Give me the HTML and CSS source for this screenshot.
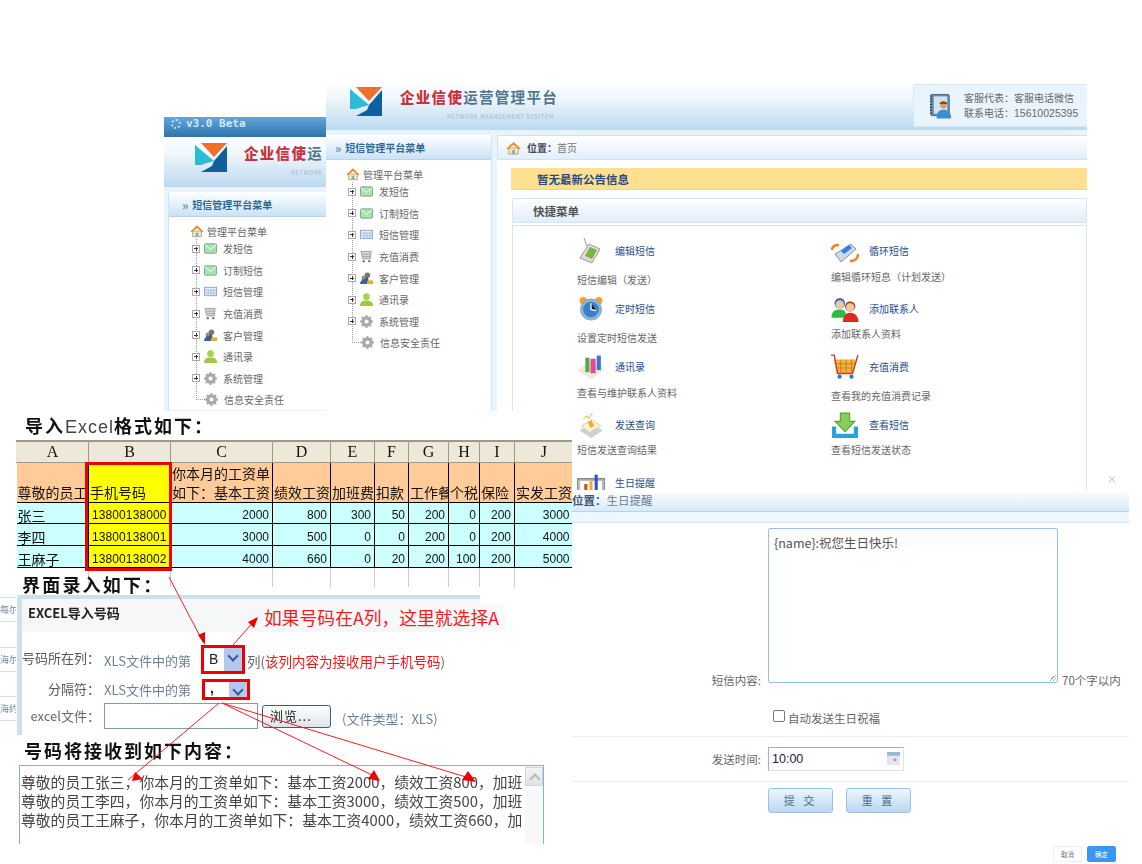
FILE: index.html
```html
<!DOCTYPE html>
<html lang="zh-CN">
<head>
<meta charset="utf-8">
<title>企业信使运营管理平台</title>
<link rel="stylesheet" href="styles.css">
</head>
<body>
<svg class="defs" width="0" height="0" aria-hidden="true">
  <symbol id="logo" viewBox="0 0 32 29"><path fill="#f0702a" d="M6 0h26L19 14z"/><path fill="#2cbcd8" d="M0 2l19 16-7 2-6 2v-0H0z"/><path fill="#10609f" d="M32 3v26H6l11-6 2-5z"/></symbol>
  <symbol id="home" viewBox="0 0 16 14"><path fill="#f4e7c8" stroke="#b9a476" d="M3 7h10v6.500H3z"/><path fill="#7eb0cc" d="M6.500 9h3v4.500h-3z"/><path fill="#ef8a2a" d="M8 .5L.5 7.500 2 8.500 8 3.500l6 5 1.500-1z"/></symbol>
  <symbol id="mail" viewBox="0 0 14 11"><rect x=".5" y=".5" width="13" height="10" rx="1" fill="#a7e2b0" stroke="#7f9f88"/><path fill="none" stroke="#fff" d="M1 1.500l6 5 6-5"/></symbol>
  <symbol id="grid" viewBox="0 0 14 10"><rect x=".5" y=".5" width="13" height="9" fill="#e7eef8" stroke="#8aa6d0"/><path stroke="#a9bbd6" d="M4.500 3v6M7.500 3v6M10.500 3v6M1 3.500h12M1 6.500h12"/></symbol>
  <symbol id="cart" viewBox="0 0 14 14"><path fill="#d4d6d6" stroke="#9a9d9d" d="M1 1.500h11l-1 8H3z"/><path stroke="#a5a8a8" d="M3 4.500h9M3 7h8"/><circle cx="4" cy="12" r="1.300" fill="#777"/><circle cx="10" cy="12" r="1.300" fill="#777"/></symbol>
  <symbol id="team" viewBox="0 0 14 14"><circle cx="8" cy="3.500" r="3" fill="#777"/><path fill="#555" d="M2 8c0-3 2-3 3-3s4 0 4 3v3H2z"/><circle cx="4" cy="6" r="2.300" fill="#8a8f99"/><path fill="#3060c0" d="M0 13c0-3 2-4 4-4s4 1 4 4z"/><path fill="#e0b020" d="M8 9h6v4H8z"/></symbol>
  <symbol id="person" viewBox="0 0 14 14"><circle cx="7" cy="4" r="3.600" fill="#a7d24c"/><path fill="#9ccb3c" d="M0 14c0-5 3-6 7-6s7 1 7 6z"/></symbol>
  <symbol id="gear" viewBox="0 0 14 14"><circle cx="7" cy="7" r="4" fill="none" stroke="#a8aaa8" stroke-width="3.500"/><path stroke="#a8aaa8" stroke-width="2" d="M7 0v3M7 11v3M0 7h3M11 7h3M2 2l2 2M10 10l2 2M12 2l-2 2M4 10l-2 2"/></symbol>
  <symbol id="book" viewBox="0 0 26 26"><rect x="2" y="1" width="19" height="22" rx="1" fill="#5f8fb0" stroke="#3d6a8a"/><rect x="5" y="3" width="14" height="18" fill="#d8e2ea"/><path stroke="#334" stroke-dasharray="1 2" stroke-width="2" d="M2 2v20"/><circle cx="15" cy="12" r="3.500" fill="#d89a6a"/><path fill="#7a4b25" d="M11 11c0-4 8-4 8 0z"/><path fill="#3b8ed0" d="M8 26c0-7 3-9 7-9s8 2 8 9z"/></symbol>
  <symbol id="b-phone" viewBox="0 0 28 26"><path stroke="#999" d="M10 8L7 0"/><path fill="#ddd" stroke="#999" d="M12 6l11 5-8 14-12-5z"/><path fill="#79b43e" d="M13 9l7 3-5 9-7-3z"/></symbol>
  <symbol id="b-loop" viewBox="0 0 28 26"><path fill="#cfd8e6" stroke="#8894a5" d="M4 16L20 6l5 5L10 24z"/><path fill="#3080e0" d="M10 13l8-6 3 3-8 6z"/><path fill="none" stroke="#f08020" stroke-width="2.500" d="M1 12c0-4 3-5 7-5M27 16c0 4-3 7-8 7"/></symbol>
  <symbol id="b-clock" viewBox="0 0 24 25"><circle cx="4.500" cy="4.500" r="3.500" fill="#f4a030"/><circle cx="19.500" cy="4.500" r="3.500" fill="#f4a030"/><circle cx="12" cy="13" r="10" fill="#7fb8e0" stroke="#9aa"/><circle cx="12" cy="13" r="7.500" fill="#3a80c4"/><path stroke="#fff" stroke-width="1.300" d="M12 7v6l5 1"/></symbol>
  <symbol id="b-people" viewBox="0 0 26 25"><circle cx="8" cy="7" r="5" fill="#4a5db0"/><circle cx="8" cy="8" r="4" fill="#edc8a8"/><path fill="#28c040" d="M0 21c0-6 3-8 8-8s6 2 6 8z"/><circle cx="18" cy="10" r="5" fill="#b04a20"/><circle cx="18" cy="11" r="4" fill="#f0c8a0"/><path fill="#e02828" d="M11 25c0-6 3-9 7-9s8 3 8 9z"/></symbol>
  <symbol id="b-books" viewBox="0 0 27 24"><path fill="#f2e8d8" d="M0 15L14 6l13 8-13 10z"/><path fill="#58a848" d="M8 3h4v14H8z"/><path fill="#e84898" d="M13 4h5v14h-5z"/><path fill="#3878d0" d="M19 1h4v14h-4z"/></symbol>
  <symbol id="b-cart" viewBox="0 0 26 24"><path fill="#f6b23a" d="M3 5h20l-3 13H6z"/><path fill="none" stroke="#c83a20" stroke-width="1.300" d="M0 1h3l3 17h14l5-17"/><path stroke="#c8832a" d="M3 9h19M4 13h17M9 5v13M14 5v13M19 5v13"/><circle cx="8" cy="21" r="2" fill="#2a7ac0"/><circle cx="19" cy="21" r="2" fill="#2a7ac0"/></symbol>
  <symbol id="b-doc" viewBox="0 0 27 28"><path fill="#d0d0d0" d="M1 20l14-8 11 8-12 8z"/><path fill="#fff1c8" stroke="#ccc" d="M3 15l12-7 9 7-12 7z"/><path fill="#f4a830" d="M10 11l4-2 3 6-4 2z"/><path fill="none" stroke="#f0a020" d="M5 8l4-4 2 3 4-6"/></symbol>
  <symbol id="b-down" viewBox="0 0 25 25"><path fill="#8acb5a" stroke="#4ea020" d="M8 1h9v8h5L12.500 19 3 9h5z"/><path fill="#2ea0dc" d="M0 14h4v7h17v-7h4v11H0z"/></symbol>
  <symbol id="b-chart" viewBox="0 0 27 16"><path fill="#bbb" stroke="#666" d="M0 4h27v12H0z"/><path fill="#fff" d="M3 6h21v10H3z"/><path fill="#e04030" d="M7 9h3v7H7z"/><path fill="#f0b020" d="M12 6h3v10h-3z"/><path fill="#3050d0" d="M17 0h3v16h-3z"/></symbol>
  <symbol id="cal" viewBox="0 0 14 14"><rect width="14" height="14" fill="#dfe7f2"/><rect width="14" height="4" fill="#9bb7d6"/><rect x="7" y="7" width="3" height="3" fill="#e88"/></symbol>
</svg>

<main class="canvas">

  <section class="win win-back">
    <div class="version"><span class="version-dot"></span>v3.0 Beta</div>
    <header class="brand brand-back">
      <svg class="logo"><use href="#logo"/></svg>
      <div class="brand-text">
        <div class="brand-name"><b>企业信使</b>运</div>
        <div class="brand-sub">NETWORK</div>
      </div>
    </header>
    <aside class="side side-back">
      <h2 class="side-head"><span>»</span> 短信管理平台菜单</h2>
      <ul class="tree tree-back">
        <li class="tree-root"><svg class="ic-home"><use href="#home"/></svg>管理平台菜单</li>
        <li class="node"><i class="plus"></i><svg class="ic"><use href="#mail"/></svg>发短信</li>
        <li class="node"><i class="plus"></i><svg class="ic"><use href="#mail"/></svg>订制短信</li>
        <li class="node"><i class="plus"></i><svg class="ic"><use href="#grid"/></svg>短信管理</li>
        <li class="node"><i class="plus"></i><svg class="ic"><use href="#cart"/></svg>充值消费</li>
        <li class="node"><i class="plus"></i><svg class="ic"><use href="#team"/></svg>客户管理</li>
        <li class="node"><i class="plus"></i><svg class="ic"><use href="#person"/></svg>通讯录</li>
        <li class="node"><i class="plus"></i><svg class="ic"><use href="#gear"/></svg>系统管理</li>
        <li class="node leaf"><i class="elbow"></i><svg class="ic"><use href="#gear"/></svg>信息安全责任</li>
      </ul>
    </aside>
  </section>

  <section class="win win-main">
    <header class="brand brand-main">
      <svg class="logo"><use href="#logo"/></svg>
      <div class="brand-text">
        <div class="brand-name"><b>企业信使</b>运营管理平台</div>
        <div class="brand-sub">NETWORK MANAGEMENT SYSYTEM</div>
      </div>
      <div class="service">
        <svg class="service-ic"><use href="#book"/></svg>
        <div class="service-text">
          <div>客服代表：客服电话微信</div>
          <div>联系电话：<span class="latin">15610025395</span></div>
        </div>
      </div>
    </header>
    <div class="main-body">
      <aside class="side side-main">
        <h2 class="side-head"><span>»</span> 短信管理平台菜单</h2>
        <ul class="tree">
          <li class="tree-root"><svg class="ic-home"><use href="#home"/></svg>管理平台菜单</li>
          <li class="node"><i class="plus"></i><svg class="ic"><use href="#mail"/></svg>发短信</li>
          <li class="node"><i class="plus"></i><svg class="ic"><use href="#mail"/></svg>订制短信</li>
          <li class="node"><i class="plus"></i><svg class="ic"><use href="#grid"/></svg>短信管理</li>
          <li class="node"><i class="plus"></i><svg class="ic"><use href="#cart"/></svg>充值消费</li>
          <li class="node"><i class="plus"></i><svg class="ic"><use href="#team"/></svg>客户管理</li>
          <li class="node"><i class="plus"></i><svg class="ic"><use href="#person"/></svg>通讯录</li>
          <li class="node"><i class="plus"></i><svg class="ic"><use href="#gear"/></svg>系统管理</li>
          <li class="node leaf"><i class="elbow"></i><svg class="ic"><use href="#gear"/></svg>信息安全责任</li>
        </ul>
      </aside>
      <div class="content">
        <div class="crumb"><svg class="ic-crumb"><use href="#home"/></svg><b>位置：</b>首页</div>
        <div class="notice">暂无最新公告信息</div>
        <h2 class="quick-head">快捷菜单</h2>
        <div class="quick">
          <div class="item"><div class="item-top"><svg class="big"><use href="#b-phone"/></svg><a>编辑短信</a></div><p class="desc gap-a">短信编辑（发送）</p></div>
          <div class="item"><div class="item-top"><svg class="big"><use href="#b-loop"/></svg><a>循环短信</a></div><p class="desc gap-b">编辑循环短息（计划发送）</p></div>
          <div class="item"><div class="item-top"><svg class="big"><use href="#b-clock"/></svg><a>定时短信</a></div><p class="desc gap-a">设置定时短信发送</p></div>
          <div class="item"><div class="item-top"><svg class="big"><use href="#b-people"/></svg><a>添加联系人</a></div><p class="desc gap-c">添加联系人资料</p></div>
          <div class="item"><div class="item-top"><svg class="big"><use href="#b-books"/></svg><a>通讯录</a></div><p class="desc gap-b">查看与维护联系人资料</p></div>
          <div class="item"><div class="item-top"><svg class="big"><use href="#b-cart"/></svg><a>充值消费</a></div><p class="desc gap-a">查看我的充值消费记录</p></div>
          <div class="item"><div class="item-top"><svg class="big"><use href="#b-doc"/></svg><a>发送查询</a></div><p class="desc gap-c">短信发送查询结果</p></div>
          <div class="item"><div class="item-top"><svg class="big"><use href="#b-down"/></svg><a>查看短信</a></div><p class="desc gap-c">查看短信发送状态</p></div>
          <div class="item"><div class="item-top"><svg class="big"><use href="#b-chart"/></svg><a>生日提醒</a></div></div>
        </div>
      </div>
    </div>
  </section>

  <section class="win win-import">
    <h3 class="shot-title title-excel">导入<span class="thin">Excel</span>格式如下：</h3>
    <table class="sheet">
      <colgroup><col class="c1"><col class="c2"><col class="c3"><col class="c4"><col class="c5"><col class="c6"><col class="c7"><col class="c8"><col class="c9"><col class="c10"></colgroup>
      <tr class="r-letters"><th>A</th><th>B</th><th>C</th><th>D</th><th>E</th><th>F</th><th>G</th><th>H</th><th>I</th><th>J</th></tr>
      <tr class="r-head"><td>尊敬的员工</td><td class="hl">手机号码</td><td>你本月的工资单<br>如下：基本工资</td><td>绩效工资</td><td>加班费</td><td>扣款</td><td>工作餐</td><td>个税</td><td>保险</td><td>实发工资</td></tr>
      <tr class="r-data r-first"><td class="name">张三</td><td class="hl num">13800138000</td><td>2000</td><td>800</td><td>300</td><td>50</td><td>200</td><td>0</td><td>200</td><td>3000</td></tr>
      <tr class="r-data"><td class="name">李四</td><td class="hl num">13800138001</td><td>3000</td><td>500</td><td>0</td><td>0</td><td>200</td><td>0</td><td>200</td><td>4000</td></tr>
      <tr class="r-data"><td class="name">王麻子</td><td class="hl num">13800138002</td><td>4000</td><td>660</td><td>0</td><td>20</td><td>200</td><td>100</td><td>200</td><td>5000</td></tr>
      <tr class="r-blank"><td></td><td></td><td></td><td></td><td></td><td></td><td></td><td></td><td></td><td></td></tr>
    </table>
    <div class="col-mark"></div>
    <h3 class="shot-title title-form">界面录入如下：</h3>
    <form class="xls-form">
      <div class="xls-head">EXCEL导入号码</div>
      <div class="xls-row row-a">
        <label class="xls-label">号码所在列：</label><span class="xls-hint">XLS文件中的第</span>
        <span class="pick pick-a"><span class="pick-val">B</span><span class="pick-arrow"></span></span>
        <span class="xls-note">列(<em>该列内容为接收用户手机号码</em>)</span>
      </div>
      <div class="xls-row row-b">
        <label class="xls-label">分隔符：</label><span class="xls-hint">XLS文件中的第</span>
        <span class="pick pick-b"><span class="pick-val">,</span><span class="pick-arrow"></span></span>
      </div>
      <div class="xls-row row-c">
        <label class="xls-label label-file">excel文件：</label><span class="file-box"></span>
        <span class="file-btn">浏览...</span><span class="file-type">(文件类型：XLS)</span>
      </div>
      <div class="annot">如果号码在A列，这里就选择A</div>
    </form>
    <h3 class="shot-title title-recv">号码将接收到如下内容：</h3>
    <div class="preview">
      <div class="preview-text">
        <div>尊敬的员工张三，你本月的工资单如下：基本工资2000，绩效工资800，加班</div>
        <div>尊敬的员工李四，你本月的工资单如下：基本工资3000，绩效工资500，加班</div>
        <div>尊敬的员工王麻子，你本月的工资单如下：基本工资4000，绩效工资660，加</div>
      </div>
      <div class="scroll"><span class="scroll-btn"></span></div>
    </div>
    <ul class="edge-list"><li>每尔</li><li>海尔</li><li>海约</li></ul>
  </section>

  <section class="win win-birthday">
    <div class="bd-crumb">位置：<span>生日提醒</span></div>
    <div class="bd-band"></div>
    <div class="bd-row bd-row-text">
      <label class="bd-label">短信内容:</label>
      <div class="bd-area">{name}:祝您生日快乐!<i class="grip"></i></div>
      <span class="bd-limit">70个字以内</span>
    </div>
    <div class="bd-row bd-row-check">
      <label class="bd-check"><span class="check-box"></span>自动发送生日祝福</label>
    </div>
    <div class="bd-row bd-row-time">
      <label class="bd-label">发送时间:</label>
      <div class="bd-time">10:00<svg class="cal"><use href="#cal"/></svg></div>
    </div>
    <div class="bd-row bd-row-btns">
      <span class="btn">提 交</span><span class="btn">重 置</span>
    </div>
    <div class="dlg-foot"><span class="dlg-btn">取消</span><span class="dlg-btn dlg-ok">确定</span></div>
    <span class="dlg-close">×</span>
  </section>

  <svg class="arrows" viewBox="0 0 1142 864">
    <g fill="none" stroke="#f02020" stroke-width="1">
      <path d="M169 577L203 642"/><path d="M233 645L255 620"/><path d="M219 703L128 780"/>
      <path d="M222 703L372 775"/><path d="M222 703L466 777"/>
    </g>
    <g fill="#f00000">
      <path d="M205 645l-7-10 7-3z"/><path d="M258 617l-10 5 6 6z"/><path d="M132 781l3-9 8 7z"/>
      <path d="M374 770l-6 9 12 2z"/><path d="M468 771l-6 9 14 2z"/>
    </g>
  </svg>
</main>
</body>
</html>
```

FILE: styles.css
```css
* { box-sizing: border-box; }
html, body { margin: 0; padding: 0; background: #fff; }
body { font-family: "Noto Sans CJK SC", "Liberation Sans", sans-serif; color: #555; }
h2, h3, p, ul { margin: 0; padding: 0; list-style: none; font-weight: normal; }
.defs { position: absolute; }

.canvas { position: relative; width: 1142px; height: 864px; overflow: hidden; filter: blur(.4px); }
.win { position: absolute; overflow: hidden; }

/* shared brand header */
.brand { display: flex; background: linear-gradient(#fff, #f2f8fc 30%, #bcd9ef); }
.logo { width: 32px; height: 29px; flex: none; }
.brand-name { font-size: 14.5px; font-weight: bold; letter-spacing: 1.3px; line-height: 18px; color: #4f7590; white-space: nowrap; }
.brand-name b { color: #c7343f; }
.brand-sub { font-size: 5.5px; letter-spacing: .7px; line-height: 7px; color: #9dbad0; margin: 8px 0 0 47px; white-space: nowrap; }

/* back window */
.win-back { left: 164px; top: 117px; width: 162px; height: 294px; background: #e8f3fb; }
.version { height: 20px; display: flex; align-items: center; gap: 5px; padding: 0 0 6px 7px; background: linear-gradient(#62a6dc, #2f74ac); color: #d4e7f5; font: bold 11px/14px "DejaVu Sans Mono", monospace; }
.version-dot { width: 10px; height: 10px; border-radius: 50%; border: 2px dotted #bfe0f7; }
.brand-back { height: 50px; padding: 6px 0 0 31px; gap: 17px; }
.brand-back .brand-text { padding-top: 1px; width: 200px; }
.side-back { position: relative; margin: 5px 0 0 4px; width: 200px; height: 218px; background: #fff; border-left: 1px solid #cfe3f3; }

/* shared sidebar */
.side-head { height: 25px; padding-left: 13px; display: flex; align-items: center; gap: 4px; font-size: 10px; font-weight: bold; color: #2f6a96; background: linear-gradient(#fff, #cbe2f5); border-bottom: 1px solid #b7d4ec; white-space: nowrap; }
.side-head span { color: #5a93c4; font-size: 12px; }
.tree { position: relative; padding: 7px 0 0 20px; font-size: 10px; color: #666; white-space: nowrap; }
.tree::before { content: ""; position: absolute; left: 26px; top: 22px; height: 161px; border-left: 1px dotted #999; }
.tree-back { padding: 7px 0 0 21px; }
.tree-back::before { left: 27px; top: 22px; }
.tree-root { position: relative; height: 14px; display: flex; align-items: center; gap: 3px; }
.ic-home { width: 14px; height: 14px; flex: none; }
.node { position: relative; height: 21.6px; display: flex; align-items: center; padding-left: 2px; }
.plus { width: 8px; height: 8px; flex: none; margin-right: 4px; border: 1px solid #aaa; background: linear-gradient(#333, #333) center / 4px 1px no-repeat, linear-gradient(#333, #333) center / 1px 4px no-repeat, #fff; }
.elbow { width: 9px; height: 11px; flex: none; margin: 0 0 11px 4px; margin-right: 0; border-left: 1px dotted #999; border-bottom: 1px dotted #999; }
.ic { width: 13px; height: 13px; flex: none; margin-right: 6px; }

/* main window */
.win-main { left: 326px; top: 82px; width: 761px; height: 408px; background: #fff; }
.brand-main { height: 48px; padding: 3px 0 0 24px; gap: 18px; position: relative; }
.brand-main .logo { margin-top: 2px; }
.brand-main .brand-text { padding-top: 3px; }
.service { position: absolute; right: 0; top: 2px; width: 174px; height: 43px; display: flex; align-items: center; gap: 10px; padding-left: 15px; background: #e9f4fc; border: 1px solid #d7e8f5; border-right: 0; border-radius: 3px 0 0 3px; font-size: 10px; line-height: 15px; color: #6a6a6a; }
.service-ic { width: 25px; height: 26px; flex: none; }
.latin { font-family: "Liberation Sans", sans-serif; font-size: 10.5px; }
.main-body { display: flex; gap: 5px; background: #e8f4fc; height: 360px; padding-top: 5px; }
.side-main { width: 166px; flex: none; background: #fff; border-right: 1px solid #cfe3f3; }
.side-main .side-head { padding-left: 9px; }
.content { flex: 1; min-width: 0; background: #fff; }
.crumb { height: 25px; display: flex; align-items: center; padding-left: 8px; font-size: 10px; color: #777; background: linear-gradient(#fff, #e2eefa); border: 1px solid #cfe3f3; border-right: 0; }
.crumb b { color: #445; margin-left: 6px; }
.ic-crumb { width: 15px; height: 14px; }
.notice { margin: 8px 0 0 14px; height: 22px; padding-left: 26px; background: #ffdf90; border-bottom: 1px solid #cfd6df; font-size: 11.5px; font-weight: bold; line-height: 22px; color: #2c4a7c; }
.quick-head { margin: 8px 0 0 15px; height: 25px; padding-left: 20px; border: 1px solid #d5e6f4; background: linear-gradient(#fff, #e0edf9); font-size: 11.5px; font-weight: bold; line-height: 24px; color: #555; }
.quick { margin: 2px 0 0 15px; height: 300px; padding: 12px 0 0 64px; border: 1px solid #d5e6f4; display: grid; grid-template-columns: 254px 1fr; grid-auto-rows: 58px; }
.item-top { display: flex; align-items: center; height: 26px; }
.big { width: 28px; height: 26px; flex: none; margin-right: 10px; }
.item-top a { font-size: 10px; line-height: 12px; color: #2a4c8c; }
.desc { font-size: 10px; line-height: 14px; color: #666; white-space: nowrap; }
.gap-a { margin-top: 9px; }
.gap-b { margin-top: 6px; }
.gap-c { margin-top: 5px; }

/* import panel */
.win-import { left: 0; top: 411px; width: 572px; height: 453px; background: #fff; padding-left: 16px; }
.shot-title { font-size: 18px; font-weight: bold; color: #111; white-space: nowrap; letter-spacing: 2px; }
.title-excel { height: 29px; line-height: 29px; padding-left: 9px; }
.thin { font-family: "Liberation Sans", sans-serif; font-weight: normal; color: #444; letter-spacing: 1px; }
.sheet { table-layout: fixed; width: 556px; border-collapse: collapse; font-size: 14px; color: #111; }
.c1 { width: 72px; } .c2 { width: 82px; } .c3 { width: 102px; } .c4 { width: 58px; } .c5 { width: 44px; }
.c6 { width: 34px; } .c7 { width: 40px; } .c8 { width: 31px; } .c9 { width: 35px; } .c10 { width: 58px; }
.sheet td, .sheet th { padding: 0 1px; overflow: hidden; white-space: nowrap; }
.r-letters th { height: 21px; background: #ece9d8; border: 1px solid #9b9a8d; border-top-width: 2px; border-left-color: #ece9d8; font: normal 16px "Liberation Serif", serif; }
.r-head td { height: 40px; background: #fc9; border-right: 1px solid #000; border-bottom: 1px solid #000; vertical-align: bottom; line-height: 19px; }
.r-data td { height: 22px; vertical-align: bottom; background: #cff; border-right: 1px solid #000; border-bottom: 1px solid #000; text-align: right; font: 12px/16px "Liberation Sans", sans-serif; padding-right: 3px; }
.r-first td { height: 21px; }
.r-head td.hl, .r-data td.hl { background: #ff0; }
.r-data td.name { text-align: left; font: 14px/16px "Noto Sans CJK SC", sans-serif; }
.r-data td.num { text-align: left; padding-left: 3px; letter-spacing: .1px; }
.r-blank td { height: 20px; border-right: 1px solid #ccc; }
.r-data td:last-child, .r-head td:last-child, .r-letters th:last-child, .r-blank td:last-child { border-right: 0; }
.col-mark { position: absolute; left: 85px; top: 51px; width: 87px; height: 109px; border: 3px solid #e00; }
.title-form { position: relative; margin: -14px 0 0 6px; height: 22px; line-height: 22px; letter-spacing: 2.2px; }
.xls-form { position: relative; margin-left: 1px; width: 463px; height: 140px; border-top: 4px solid #cfdfec; border-left: 5px solid #cfdfec; font-size: 13px; color: #666; }
.xls-head { height: 33px; padding-left: 6px; background: #f5f7f9; font: bold 13px/28px "Noto Sans CJK SC", sans-serif; color: #222; }
.xls-row { display: flex; align-items: center; white-space: nowrap; }
.row-a { height: 29px; margin-top: 13px; }
.row-b { height: 21px; margin-top: 5px; }
.row-c { height: 26px; margin-top: 3px; }
.xls-label { width: 78px; text-align: right; color: #555; }
.row-a .xls-label { margin-bottom: 5px; }
.row-b .xls-label { margin-bottom: 3px; }
.xls-hint { margin-left: 4px; width: 91px; color: #6d7f90; font-size: 13px; }
.row-a .xls-hint, .xls-note { padding-top: 2px; }
.pick { height: 100%; display: flex; border: 3px solid #e00; background: #fff; color: #222; font: 14px/22px "Liberation Sans", sans-serif; }
.pick-a { width: 44px; margin-left: 6px; }
.pick-b { width: 48px; margin-left: 7px; }
.pick-val { flex: 1; padding-left: 5px; }
.pick-b .pick-val { font-weight: bold; line-height: 12px; }
.pick-arrow { position: relative; width: 18px; background: #b4c8ef; }
.pick-arrow::after { content: ""; position: absolute; left: 5px; top: 4px; width: 6px; height: 6px; border: solid #3a5a90; border-width: 0 2px 2px 0; transform: rotate(45deg); }
.xls-note { margin-left: 2px; font-size: 13.5px; }
.xls-note em { font-style: normal; color: #f01818; }
.label-file { color: #667; margin-bottom: 1px; }
.file-box { margin-left: 4px; width: 154px; height: 26px; border: 1px solid #7f9db9; background: #fff; }
.file-btn { margin-left: 4px; width: 69px; height: 23px; border: 1px solid #375f88; border-radius: 3px; background: linear-gradient(#fff, #dfe3e8); color: #222; font-size: 13px; line-height: 20px; padding-left: 7px; letter-spacing: 1px; }
.file-type { margin-left: 11px; color: #6d7f90; padding-top: 4px; }
.annot { position: absolute; left: 242px; top: 5px; font-size: 17.8px; line-height: 26px; color: #f02020; white-space: nowrap; background: #f7f8fa; padding-right: 6px; }
.title-recv { margin: 4px 0 0 8px; height: 22px; line-height: 22px; }
.preview { margin: 4px 0 0 3px; width: 525px; height: 79px; display: flex; border: 1px solid #83aee4; border-bottom: 0; }
.preview-text { flex: 1; min-width: 0; overflow: hidden; padding: 6px 0 0 1px; font-size: 14.8px; line-height: 19px; color: #444; white-space: nowrap; }
.scroll { width: 18px; flex: none; background: #f8f8f8; }
.scroll-btn { display: block; height: 19px; margin-top: 1px; background: linear-gradient(#f4f4f4, #dfe3e6); border: 1px solid #d0d4d8; position: relative; }
.scroll-btn::after { content: ""; position: absolute; left: 5px; top: 7px; width: 6px; height: 6px; border: solid #bbb; border-width: 2px 0 0 2px; transform: rotate(45deg); }
.edge-list { position: absolute; left: 0; top: 186px; width: 16px; overflow: hidden; font-size: 9px; color: #6f8ba0; white-space: nowrap; }
.edge-list li { height: 25px; margin-bottom: 24.5px; border-top: 1px solid #cfe0ea; border-bottom: 1px solid #cfe0ea; line-height: 24px; }

/* birthday panel */
.win-birthday { left: 572px; top: 490px; width: 570px; height: 374px; background: #fff; padding-right: 13px; overflow: visible; }
.bd-crumb { height: 22px; font-size: 11.5px; line-height: 20px; font-weight: bold; color: #3a5a78; background: linear-gradient(#fff, #d9e9f7); border-bottom: 1px solid #b5d3ea; }
.bd-crumb span { font-weight: normal; color: #6a7f94; }
.bd-band { height: 11px; background: #eef7fd; border-bottom: 1px solid #dde3e6; }
.bd-row { display: flex; font-size: 11.5px; color: #666; border-bottom: 1px solid transparent; }
.bd-label { width: 189px; text-align: right; flex: none; }
.bd-row-text { height: 155px; margin-top: 6px; align-items: flex-end; line-height: 14px; }
.bd-row-text .bd-label { margin-bottom: -4px; }
.bd-area { position: relative; width: 290px; height: 155px; margin-left: 7px; padding: 6px 5px; flex: none; border: 1px solid #9bbce6; border-radius: 2px; background: linear-gradient(#f9f9f9, #fff 15%); font-size: 12.5px; line-height: 16px; color: #555; }
.grip { position: absolute; right: 1px; bottom: 1px; width: 7px; height: 7px; background: linear-gradient(135deg, transparent 50%, #aaa 50%, #aaa 60%, transparent 60%, transparent 75%, #aaa 75%, #aaa 85%, transparent 85%); }
.bd-limit { margin: 0 0 -4px 4px; font-size: 11.5px; line-height: 14px; white-space: nowrap; }
.bd-row-check { margin-top: 26px; height: 27px; padding-left: 201px; border-bottom-color: #eceff1; }
.bd-check { display: flex; gap: 3px; font-size: 11.5px; line-height: 14px; padding-top: 1px; }
.check-box { width: 12px; height: 12px; margin-top: -1px; border: 1px solid #777; border-radius: 2px; background: #fff; }
.bd-row-time { align-items: center; height: 45px; border-bottom-color: #eceff1; }
.bd-time { position: relative; width: 136px; height: 24px; margin-left: 7px; padding-left: 3px; border: 1px solid #d5e3f4; border-top-color: #8ab3e6; border-left-color: #8ab3e6; font: 12.5px/22px "Liberation Sans", sans-serif; color: #223; }
.cal { position: absolute; right: 3px; top: 4px; width: 13px; height: 13px; }
.bd-row-btns { padding: 6px 0 0 196px; gap: 13px; height: 32px; }
.btn { width: 65px; height: 25px; border: 1px solid #9cc3e4; border-radius: 3px; background: linear-gradient(#eef6fc, #b9d8f1); text-align: center; font-size: 11px; line-height: 23px; letter-spacing: 3px; color: #44708f; }
.dlg-foot { display: flex; justify-content: flex-end; gap: 5px; margin-top: 32px; padding-right: 13px; }
.dlg-btn { width: 29px; height: 16px; border: 1px solid #eee; border-radius: 2px; font-size: 6.5px; line-height: 14px; text-align: center; color: #777; background: #fff; }
.dlg-ok { background: #3b96f2; border-color: #3b96f2; color: #fff; }
.dlg-close { position: absolute; left: 535px; top: -17px; font-size: 10px; line-height: 12px; color: #bbb; }

.arrows { position: absolute; left: 0; top: 0; width: 1142px; height: 864px; pointer-events: none; }
```
